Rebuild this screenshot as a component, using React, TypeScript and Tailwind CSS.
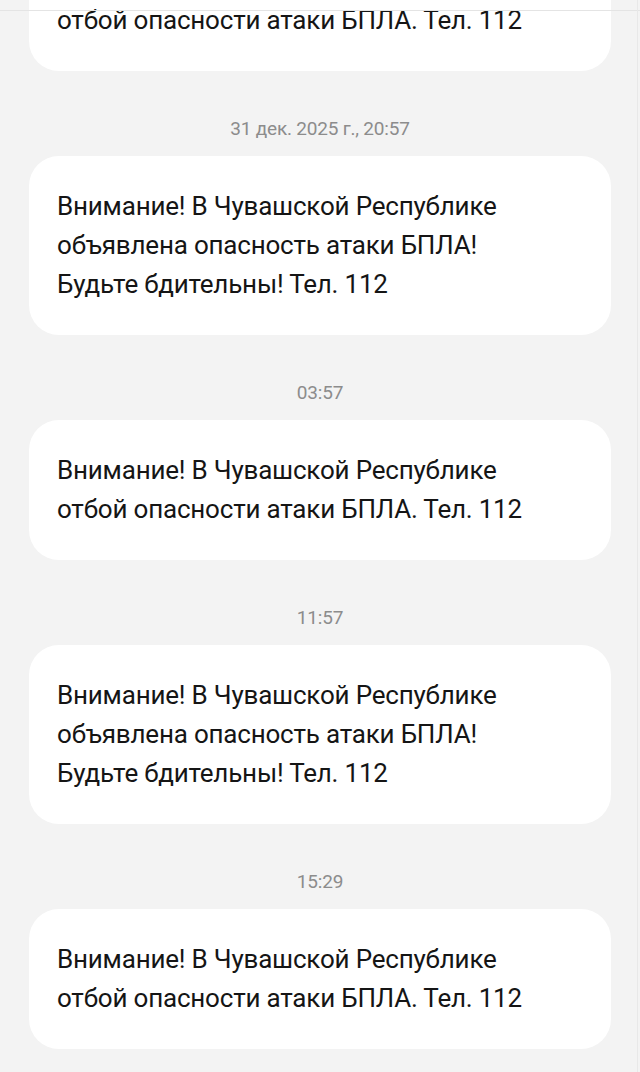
const messages = [
  { time: "", text: ["Внимание! В Чувашской Республике", "отбой опасности атаки БПЛА. Тел. 112"] },
  {
    time: "31 дек. 2025 г., 20:57",
    text: ["Внимание! В Чувашской Республике", "объявлена опасность атаки БПЛА!", "Будьте бдительны! Тел. 112"],
  },
  { time: "03:57", text: ["Внимание! В Чувашской Республике", "отбой опасности атаки БПЛА. Тел. 112"] },
  {
    time: "11:57",
    text: ["Внимание! В Чувашской Республике", "объявлена опасность атаки БПЛА!", "Будьте бдительны! Тел. 112"],
  },
  { time: "15:29", text: ["Внимание! В Чувашской Республике", "отбой опасности атаки БПЛА. Тел. 112"] },
];

function Bubble({ lines }: { lines: string[] }) {
  return (
    <div className="bg-white rounded-[30px] px-[28px] py-[31px] text-[26px] leading-[39px] text-[#151515] tracking-[-0.2px]">
      {lines.map((l, i) => (
        <div key={i}>{l}</div>
      ))}
    </div>
  );
}

export default function App() {
  return (
    <div
      className="w-[640px] h-[1072px] overflow-hidden bg-[#f3f3f3] relative"
      style={{ fontFamily: "Roboto, 'Noto Sans', sans-serif" }}
    >
      <div className="px-[29px] -mt-[69px]">
        {messages.map((m, i) => (
          <div key={i}>
            {m.time && (
              <div className="mt-[46px] mb-[16px] text-center text-[19px] leading-[23px] tracking-[-0.2px] text-[#8c8c8c]">
                {m.time}
              </div>
            )}
            <Bubble lines={m.text} />
          </div>
        ))}
      </div>
      <div className="absolute left-0 right-0 top-[10px] h-px bg-[#e4e4e4]" />
      <div className="absolute top-0 bottom-0 right-[2px] w-px bg-[#e8e8e8]" />
    </div>
  );
}
